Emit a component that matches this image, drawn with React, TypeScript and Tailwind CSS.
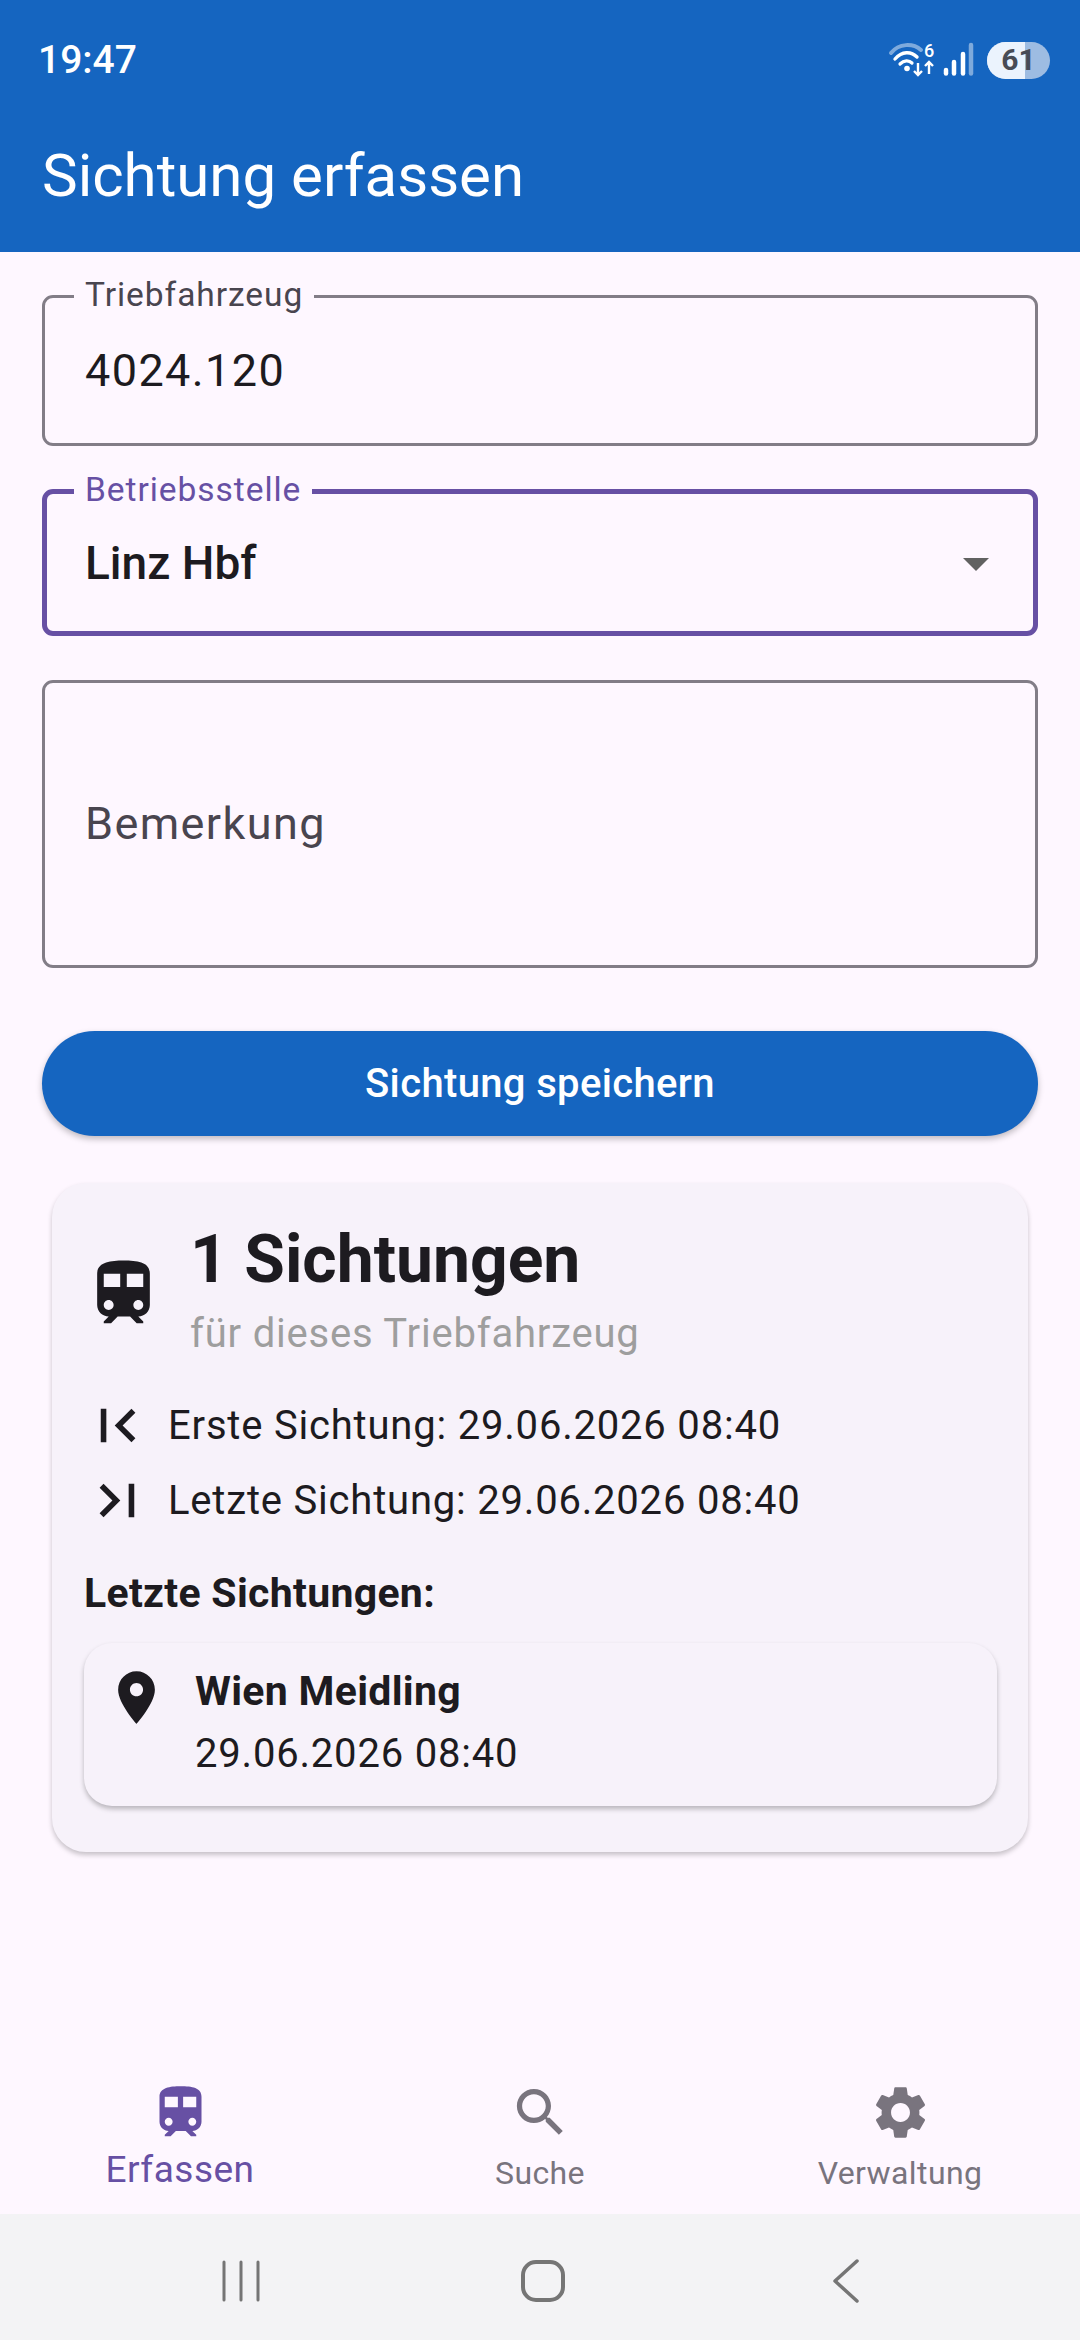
const trainPath =
  'M12 2c-4 0-8 .5-8 4v9.5C4 17.43 5.57 19 7.5 19L6 20.5v.5h2.23l2-2H14l2 2h2v-.5L16.5 19c1.93 0 3.5-1.57 3.5-3.5V6c0-3.5-3.58-4-8-4zM7.5 17c-.83 0-1.5-.67-1.5-1.5S6.67 14 7.5 14s1.5.67 1.5 1.5S8.33 17 7.5 17zm3.5-7H6V6h5v4zm2 0V6h5v4h-5zm3.5 7c-.83 0-1.5-.67-1.5-1.5s.67-1.5 1.5-1.5 1.5.67 1.5 1.5-.67 1.5-1.5 1.5z';
const firstPagePath = 'M18.41 16.59L13.82 12l4.59-4.59L17 6l-6 6 6 6zM6 6h2v12H6z';
const lastPagePath = 'M5.59 7.41L10.18 12l-4.59 4.59L7 18l6-6-6-6zM16 6h2v12h-2z';
const placePath =
  'M12 2C8.13 2 5 5.13 5 9c0 5.25 7 13 7 13s7-7.75 7-13c0-3.87-3.13-7-7-7zm0 9.5c-1.38 0-2.5-1.12-2.5-2.5s1.12-2.5 2.5-2.5 2.5 1.12 2.5 2.5-1.12 2.5-2.5 2.5z';
const searchPath =
  'M15.5 14h-.79l-.28-.27C15.41 12.59 16 11.11 16 9.5 16 5.91 13.09 3 9.5 3S3 5.91 3 9.5 5.91 16 9.5 16c1.61 0 3.09-.59 4.23-1.57l.27.28v.79l5 4.99L20.49 19l-4.99-5zm-6 0C7.01 14 5 11.99 5 9.5S7.01 5 9.5 5 14 7.01 14 9.5 11.99 14 9.5 14z';
const settingsPath =
  'M19.14 12.94c.04-.3.06-.61.06-.94 0-.32-.02-.64-.07-.94l2.03-1.58c.18-.14.23-.41.12-.61l-1.92-3.32c-.12-.22-.37-.29-.59-.22l-2.39.96c-.5-.38-1.03-.7-1.62-.94l-.36-2.54c-.04-.24-.24-.41-.48-.41h-3.84c-.24 0-.43.17-.47.41l-.36 2.54c-.59.24-1.13.57-1.62.94l-2.39-.96c-.22-.08-.47 0-.59.22L2.74 8.87c-.12.21-.08.47.12.61l2.03 1.58c-.05.3-.09.63-.09.94s.02.64.07.94l-2.03 1.58c-.18.14-.23.41-.12.61l1.92 3.32c.12.22.37.29.59.22l2.39-.96c.5.38 1.03.7 1.62.94l.36 2.54c.05.24.24.41.48.41h3.84c.24 0 .44-.17.47-.41l.36-2.54c.59-.24 1.13-.56 1.62-.94l2.39.96c.22.08.47 0 .59-.22l1.92-3.32c.12-.22.07-.47-.12-.61l-2.01-1.58zM12 15.6c-1.98 0-3.6-1.62-3.6-3.6s1.62-3.6 3.6-3.6 3.6 1.62 3.6 3.6-1.62 3.6-3.6 3.6z';

function Icon({ d, className }: { d: string; className: string }) {
  return (
    <svg viewBox="0 0 24 24" fill="currentColor" className={className}>
      <path d={d} />
    </svg>
  );
}

function StatusIcons() {
  return (
    <div className="flex items-center">
      <svg viewBox="0 -6 87 42" className="w-[87px] h-[42px] -mt-[6px]" fill="none">
        <path d="M3 11 C11 1 25 1 33 8" stroke="#ffffff" strokeOpacity="0.45" strokeWidth="4" strokeLinecap="round" />
        <path d="M7 17 C14 9 23 9 29 15" stroke="#ffffff" strokeWidth="3.4" strokeLinecap="round" />
        <path d="M12 22 C16 18 21 18 24 21" stroke="#ffffff" strokeWidth="3.2" strokeLinecap="round" />
        <circle cx="19" cy="26.5" r="2.8" fill="#ffffff" />
        <path d="M30 21 L30 33 M26 29 L30 33 L34 29" stroke="#ffffff" strokeWidth="2.4" />
        <path d="M41 32 L41 20 M37 24 L41 20 L45 24" stroke="#ffffff" strokeWidth="2.4" />
        <text x="36" y="15" fill="#ffffff" fontSize="18" fontWeight="500" fontFamily="Roboto, sans-serif">
          6
        </text>
        <g strokeLinecap="round" strokeWidth="4.5" stroke="#ffffff">
          <path d="M58 31.5 L58 28" />
          <path d="M66 31.5 L66 20" />
          <path d="M75 31.5 L75 12" />
          <path d="M83 31.5 L83 3" strokeOpacity="0.45" />
        </g>
      </svg>
      <div className="relative ml-[12px] w-[63px] h-[37px] rounded-full overflow-hidden bg-[#9dbce2]">
        <div className="absolute left-0 top-0 bottom-0 w-[38px] bg-[#ebf3fd]" />
        <div className="relative h-full flex items-center justify-center text-[#474b55] text-[30px] font-bold leading-none">61</div>
      </div>
    </div>
  );
}

function Field({
  label,
  focused,
  className,
  children,
}: {
  label: string;
  focused?: boolean;
  className: string;
  children: React.ReactNode;
}) {
  return (
    <div
      className={`relative flex items-center rounded-[11px] ${
        focused ? 'border-[5px] border-[#6750a4] px-[38px]' : 'border-[3px] border-[#827d87] px-[40px]'
      } ${className}`}
    >
      {label && (
        <span
          className={`absolute px-[11px] bg-[#fef7ff] text-[33.5px] leading-[28px] tracking-[0.95px] ${
            focused ? 'text-[#6750a4] -top-[18px] left-[27px]' : 'text-[#49454f] -top-[17px] left-[29px]'
          }`}
        >
          {label}
        </span>
      )}
      {children}
    </div>
  );
}

function NavItem({
  d,
  label,
  active,
}: {
  d: string;
  label: string;
  active?: boolean;
}) {
  return (
    <div className={`flex-1 flex flex-col items-center ${active ? 'text-[#6750a4]' : 'text-[#79747e]'}`}>
      <Icon d={d} className="w-[63px] h-[63px]" />
      <span className={active ? 'mt-[1px] text-[37px] leading-[50px] tracking-[0.5px]' : 'mt-[4px] text-[32px] leading-[50px] tracking-[0.4px]'}>
        {label}
      </span>
    </div>
  );
}

export default function App() {
  return (
    <div className="w-full h-[2340px] flex flex-col bg-[#fef7ff] font-['Roboto',sans-serif] text-[#1d1b20]">
      {/* App bar */}
      <header className="h-[252px] bg-[#1565c0] text-white shrink-0">
        <div className="flex items-center justify-between pl-[38px] pr-[30px] pt-[36px] h-[84px]">
          <span className="text-[39px] font-medium leading-[48px]">19:47</span>
          <StatusIcons />
        </div>
        <div className="pl-[42px] pt-[56px] text-[60px] leading-[72px]">Sichtung erfassen</div>
      </header>

      {/* Form */}
      <main className="flex-1 px-[42px] pt-[43px]">
        <Field label="Triebfahrzeug" className="h-[151px]">
          <span className="text-[45px] tracking-[1.4px] leading-[60px]">4024.120</span>
        </Field>
        <Field label="Betriebsstelle" focused className="h-[147px] mt-[43px] justify-between">
          <span className="text-[46px] font-medium leading-[60px]">Linz Hbf</span>
          <div className="mt-[3px] mr-[6px] w-0 h-0 border-x-[13px] border-x-transparent border-t-[13px] border-t-[#616161]" />
        </Field>
        <Field label="" className="h-[288px] mt-[44px]">
          <span className="text-[45px] tracking-[1.4px] leading-[60px] text-[#49454f]">Bemerkung</span>
        </Field>

        <button className="mt-[63px] w-full h-[105px] rounded-full bg-[#1565c0] text-white text-[40px] font-medium tracking-[0.35px] shadow-[0_3px_6px_rgba(0,0,0,0.25)]">
          Sichtung speichern
        </button>

        {/* Stats card */}
        <section className="mx-[10px] mt-[47px] h-[669px] rounded-[34px] bg-[#f7f2fa] shadow-[0_3px_5px_rgba(0,0,0,0.22)] px-[32px] pt-[36px]">
          <div className="flex items-center">
            <Icon d={trainPath} className="w-[79px] h-[79px] text-[#1d1b20] shrink-0 mt-[8px]" />
            <div className="ml-[27px]">
              <div className="text-[66px] font-bold leading-[82px]">1 Sichtungen</div>
              <div className="text-[40px] leading-[50px] tracking-[0.8px] text-[#9e9e9e] mt-[8px]">für dieses Triebfahrzeug</div>
            </div>
          </div>
          <div className="flex items-center mt-[29px] h-[75px]">
            <Icon d={firstPagePath} className="w-[67px] h-[67px] shrink-0" />
            <span className="ml-[17px] text-[40px] tracking-[0.8px] leading-[50px]">Erste Sichtung: 29.06.2026 08:40</span>
          </div>
          <div className="flex items-center h-[75px]">
            <Icon d={lastPagePath} className="w-[67px] h-[67px] shrink-0" />
            <span className="ml-[17px] text-[40px] tracking-[0.8px] leading-[50px]">Letzte Sichtung: 29.06.2026 08:40</span>
          </div>
          <div className="mt-[30px] text-[41px] font-bold tracking-[0.3px] leading-[50px]">Letzte Sichtungen:</div>
          <div className="mt-[25px] h-[163px] -mr-[1px] rounded-[28px] bg-[#f7f2fa] shadow-[0_3px_5px_rgba(0,0,0,0.25)] flex pl-[21px] pt-[23px]">
            <Icon d={placePath} className="w-[63px] h-[63px] shrink-0" />
            <div className="ml-[27px]">
              <div className="text-[41px] font-bold tracking-[0.3px] leading-[50px]">Wien Meidling</div>
              <div className="text-[40px] tracking-[0.8px] leading-[50px] mt-[13px]">29.06.2026 08:40</div>
            </div>
          </div>
        </section>
      </main>

      {/* Bottom navigation */}
      <nav className="h-[152px] shrink-0 flex pt-[19px] bg-[#fef7ff]">
        <NavItem d={trainPath} label="Erfassen" active />
        <NavItem d={searchPath} label="Suche" />
        <NavItem d={settingsPath} label="Verwaltung" />
      </nav>

      {/* System navigation */}
      <div className="h-[126px] shrink-0 bg-[#f3f3f5] flex items-center justify-center pt-[8px] text-[#757575]">
        <svg viewBox="0 0 40 42" className="w-[40px] h-[42px]" fill="none" stroke="currentColor" strokeWidth="3" strokeLinecap="round">
          <path d="M3 2V40M20 2V40M37 2V40" />
        </svg>
        <svg viewBox="0 0 44 42" className="ml-[260px] w-[44px] h-[42px]" fill="none" stroke="currentColor" strokeWidth="4">
          <rect x="2" y="2" width="40" height="38" rx="13" />
        </svg>
        <svg viewBox="0 0 28 44" className="ml-[267px] w-[28px] h-[44px]" fill="none" stroke="currentColor" strokeWidth="3.5" strokeLinecap="round" strokeLinejoin="round">
          <path d="M25 2 L3 22 L25 42" />
        </svg>
      </div>
    </div>
  );
}
